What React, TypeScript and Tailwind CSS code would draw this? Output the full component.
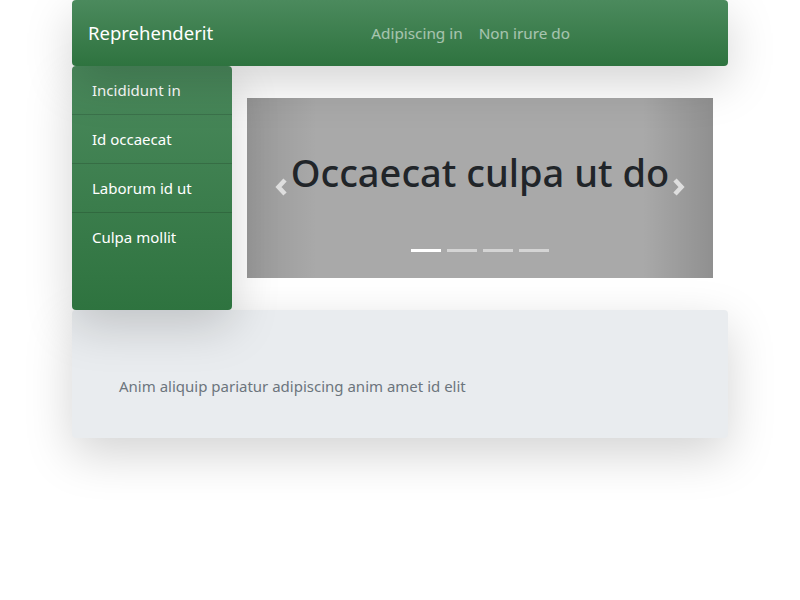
import React from "react";

const sideItems = ["Incididunt in", "Id occaecat", "Laborum id ut", "Culpa mollit"];
const navLinks = ["Adipiscing in", "Non irure do"];

function Chevron({ dir }: { dir: "left" | "right" }) {
  return (
    <svg width="16" height="20" viewBox="0 0 16 20">
      <polyline
        points={dir === "left" ? "11,3 4.5,10 11,17" : "5,3 11.5,10 5,17"}
        fill="none"
        stroke="#dedede"
        strokeWidth="4.5"
        strokeLinejoin="miter"
      />
    </svg>
  );
}

export default function App() {
  return (
    <div className="min-h-[600px] bg-white font-['Noto_Sans',sans-serif]">
      <div className="mx-auto w-[656px]">
        {/* navbar */}
        <nav className="relative z-30 flex h-[66px] items-center rounded bg-gradient-to-b from-[#4b8a5d] to-[#2e733f] px-4 shadow-[0_16px_48px_rgba(0,0,0,0.175)]">
          <span className="mr-4 text-[18.5px] text-white">Reprehenderit</span>
          <div className="flex flex-1 justify-center">
            {navLinks.map((l) => (
              <span key={l} className="px-2 text-[15.3px] text-white/55">
                {l}
              </span>
            ))}
          </div>
        </nav>

        <div className="flex">
          {/* sidebar */}
          <aside className="relative z-20 h-[244px] w-[160px] rounded bg-gradient-to-b from-[#4b8a5d] to-[#2e733f] shadow-[0_16px_48px_rgba(0,0,0,0.175)]">
            {sideItems.map((s, i) => (
              <div
                key={s}
                className={`px-5 py-3 text-[15px] leading-6 text-white ${
                  i < sideItems.length - 1 ? "border-b border-black/15" : ""
                }`}
              >
                {s}
              </div>
            ))}
          </aside>

          {/* carousel */}
          <div className="flex-1 px-[15px] py-8">
            <div className="relative h-[180px] overflow-hidden bg-[#a9a9a9]">
              <div className="absolute inset-y-0 left-0 w-[15%] bg-gradient-to-r from-black/10 to-transparent" />
              <div className="absolute inset-y-0 right-0 w-[15%] bg-gradient-to-l from-black/15 to-transparent" />
              <div className="relative flex flex-col items-center pt-[50px]">
                <h1 className="text-[38px] font-medium leading-[48px] text-[#212529]">
                  Occaecat culpa ut do
                </h1>
              </div>
              <div className="absolute left-[27px] top-[79px]">
                <Chevron dir="left" />
              </div>
              <div className="absolute right-[27px] top-[79px]">
                <Chevron dir="right" />
              </div>
              <div className="absolute bottom-[26px] left-0 right-0 flex justify-center gap-[6px]">
                {[0, 1, 2, 3].map((i) => (
                  <span
                    key={i}
                    className={`h-[3px] w-[30px] ${i === 0 ? "bg-white" : "bg-white/50"}`}
                  />
                ))}
              </div>
            </div>
          </div>
        </div>

        {/* jumbotron */}
        <div className="relative z-10 h-[128px] rounded bg-[#e9ecef] pl-[47px] pt-16 shadow-[0_16px_48px_rgba(0,0,0,0.175)]">
          <p className="text-[15px] leading-6 text-[#6c757d]">
            Anim aliquip pariatur adipiscing anim amet id elit
          </p>
        </div>
      </div>
    </div>
  );
}
